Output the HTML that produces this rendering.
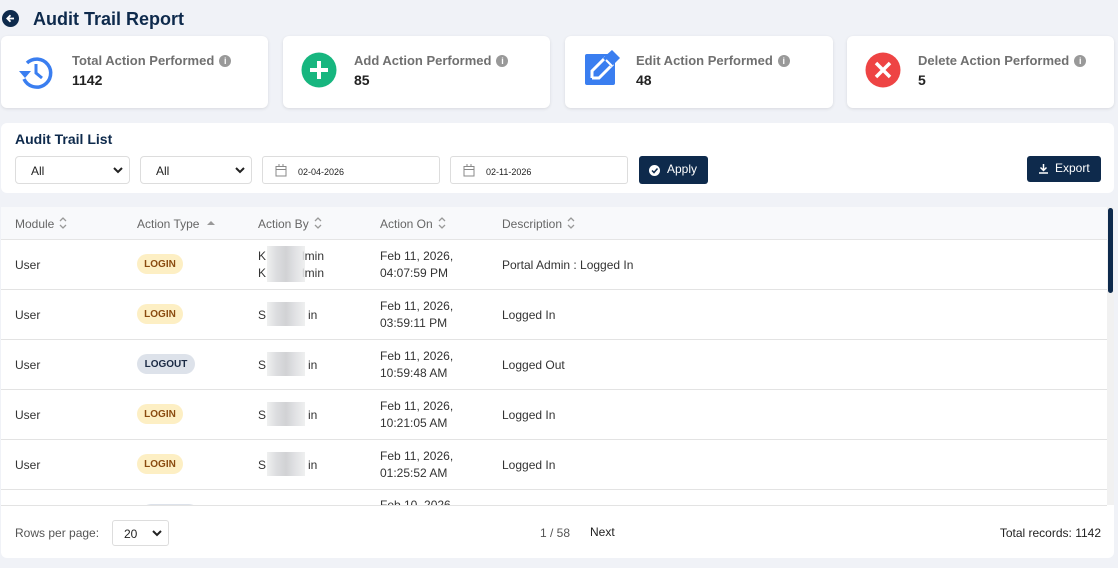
<!DOCTYPE html>
<html><head><style>
*{box-sizing:border-box;margin:0;padding:0}
body{width:1118px;height:568px;background:#f0f2f7;font-family:"Liberation Sans",Arial,sans-serif;position:relative;overflow:hidden;color:#333}
.abs{position:absolute}
.card{position:absolute;top:36px;height:72px;background:#fff;border-radius:6px;box-shadow:0 1px 3px rgba(0,0,0,.1)}
.card .lbl{position:absolute;left:71px;top:17px;font-size:13px;color:#707070;font-weight:bold}
.card .val{position:absolute;left:71px;top:36px;font-size:14px;color:#222;font-weight:bold}
.info{display:inline-block;width:12px;height:12px;border-radius:50%;background:#999;color:#fff;font-size:9px;text-align:center;line-height:12px;margin-left:5px;vertical-align:1px}
.sel{position:absolute;top:156px;height:28px;border:1px solid #ddd;border-radius:4px;background:#fff;font-size:12px;color:#222;padding:7px 0 0 15px}
.ch{position:absolute;right:6px;top:10px}
.date{position:absolute;top:156px;height:28px;border:1px solid #ddd;border-radius:3px;background:#fff;font-size:9px;color:#222;padding:10px 0 0 35px}
.btn{position:absolute;background:#0e2a4c;color:#fff;border-radius:3px;font-size:12px}
.hdr{position:absolute;top:207px;left:1px;width:1106px;height:33px;background:#f8f9fb;border-bottom:1px solid #e5e5e5}
.th{position:absolute;top:216px;font-size:12px;color:#666}
.th svg{vertical-align:-2px;margin-left:4px}
.row{position:absolute;left:1px;width:1106px;height:50px;background:#fff;border-bottom:1px solid #e3e3e3;font-size:12px;color:#333}
.row div{position:absolute}
.b{height:20px;border-radius:10px;font-size:10px;font-weight:bold;padding:5px 0 0;text-align:center}
.li{background:#fdefc4;color:#8a4b10;width:46px}
.lo{background:#dde2ea;color:#1b2a44;width:58px}
.blur{background:linear-gradient(90deg,#eceded,#d6d7da,#c9cacd,#dcdde0,#eceded);width:38px;height:28px;opacity:.85}
</style></head><body>
<svg class="abs" style="left:2px;top:10px" width="17" height="17" viewBox="0 0 17 17"><circle cx="8.5" cy="8.5" r="8.5" fill="#0e2a4c"/><path d="M12 8.5H5.5M8.5 5.3L5.3 8.5L8.5 11.7" stroke="#fff" stroke-width="1.8" fill="none"/></svg>
<div class="abs" style="left:33px;top:9px;font-size:18px;font-weight:bold;color:#0e2a4c">Audit Trail Report</div>

<div class="card" style="left:1px;width:267px">
<svg class="abs" style="left:16px;top:17px" width="38" height="38" viewBox="0 0 38 38"><path d="M10 10A14 14 0 1 1 7 26" stroke="#3a7ef0" stroke-width="3.5" fill="none"/><path d="M2 18l6 7 6-7z" fill="#3a7ef0"/><path d="M19 11v9l6 5" stroke="#3a7ef0" stroke-width="3" fill="none"/></svg>
<div class="lbl">Total Action Performed<span class="info">i</span></div><div class="val">1142</div></div>
<div class="card" style="left:283px;width:267px">
<svg class="abs" style="left:18px;top:16px" width="36" height="36"><circle cx="18" cy="18" r="17.5" fill="#17b67f"/><path d="M18 9v18M9 18h18" stroke="#fff" stroke-width="4"/></svg>
<div class="lbl">Add Action Performed<span class="info">i</span></div><div class="val">85</div></div>
<div class="card" style="left:565px;width:268px">
<svg class="abs" style="left:19px;top:14px" width="38" height="38" viewBox="0 0 38 38"><rect x="1" y="4" width="30" height="31" rx="2" fill="#3a7ef0"/><path d="M8 28V21L22 7" stroke="#fff" stroke-width="3" fill="none"/><path d="M8 28h7L29 14" stroke="#fff" stroke-width="3" fill="none"/><path d="M19 8l9-8 8 8-9 9z" fill="#3a7ef0"/><path d="M22 10l6 6" stroke="#fff" stroke-width="2"/></svg>
<div class="lbl">Edit Action Performed<span class="info">i</span></div><div class="val">48</div></div>
<div class="card" style="left:847px;width:267px">
<svg class="abs" style="left:18px;top:16px" width="36" height="36"><circle cx="18" cy="18" r="17.5" fill="#ee4444"/><path d="M11 11l14 14M25 11L11 25" stroke="#fff" stroke-width="3.5"/></svg>
<div class="lbl">Delete Action Performed<span class="info">i</span></div><div class="val">5</div></div>

<div class="abs" style="left:1px;top:123px;width:1113px;height:70px;background:#fff;border-radius:6px"></div>
<div class="abs" style="left:15px;top:131px;font-size:14px;font-weight:bold;color:#0e2a4c">Audit Trail List</div>
<div class="sel" style="left:15px;width:115px">All<svg class="ch" width="10" height="7"><path d="M1 1l4 4 4-4" stroke="#222" stroke-width="2" fill="none"/></svg></div>
<div class="sel" style="left:140px;width:112px">All<svg class="ch" width="10" height="7"><path d="M1 1l4 4 4-4" stroke="#222" stroke-width="2" fill="none"/></svg></div>
<div class="date" style="left:262px;width:178px"><svg class="abs" style="left:12px;top:7px" width="12" height="13"><rect x="1" y="2.5" width="10" height="9.5" fill="none" stroke="#888"/><path d="M1 5.5h10M4 0v3M8 0v3" stroke="#888"/></svg>02-04-2026</div>
<div class="date" style="left:450px;width:178px"><svg class="abs" style="left:12px;top:7px" width="12" height="13"><rect x="1" y="2.5" width="10" height="9.5" fill="none" stroke="#888"/><path d="M1 5.5h10M4 0v3M8 0v3" stroke="#888"/></svg>02-11-2026</div>
<div class="btn" style="left:639px;top:156px;width:69px;height:28px;padding:6px 0 0 28px"><svg class="abs" style="left:10px;top:9px" width="11" height="11"><circle cx="5.5" cy="5.5" r="5.5" fill="#fff"/><path d="M3 5.5l2 2 3.5-4" stroke="#0e2a4c" stroke-width="1.5" fill="none"/></svg>Apply</div>
<div class="btn" style="left:1027px;top:156px;width:74px;height:26px;padding:5px 0 0 28px"><svg class="abs" style="left:12px;top:8px" width="9" height="10"><path d="M4.5 0v6M1.5 3.5l3 3 3-3M0 9h9" stroke="#fff" stroke-width="1.5" fill="none"/></svg>Export</div>

<div class="abs" style="left:1px;top:207px;width:1113px;height:351px;background:#fff;border-radius:6px"></div>
<div class="hdr"></div>
<div class="th" style="left:15px">Module<svg width="10" height="14"><path d="M2 5l3-3 3 3M2 9l3 3 3-3" stroke="#999" stroke-width="1.3" fill="none"/></svg></div>
<div class="th" style="left:137px">Action Type<svg width="14" height="14"><path d="M4 9l4-4 4 4z" fill="#999"/></svg></div>
<div class="th" style="left:258px">Action By<svg width="10" height="14"><path d="M2 5l3-3 3 3M2 9l3 3 3-3" stroke="#999" stroke-width="1.3" fill="none"/></svg></div>
<div class="th" style="left:380px">Action On<svg width="10" height="14"><path d="M2 5l3-3 3 3M2 9l3 3 3-3" stroke="#999" stroke-width="1.3" fill="none"/></svg></div>
<div class="th" style="left:502px">Description<svg width="10" height="14"><path d="M2 5l3-3 3 3M2 9l3 3 3-3" stroke="#999" stroke-width="1.3" fill="none"/></svg></div>

<div class="row" style="top:240px"><div style="left:14px;top:18px">User</div><div class="b li" style="left:136px;top:14px">LOGIN</div><div style="left:257px;top:8px;line-height:17px">K<span style="color:#fff0">xxxxxx</span>lmin<br>K<span style="color:#fff0">xxxxxx</span>lmin</div><div class="blur" style="left:266px;top:6px;height:36px"></div><div style="left:379px;top:8px;line-height:17px">Feb 11, 2026,<br>04:07:59 PM</div><div style="left:501px;top:18px">Portal Admin : Logged In</div></div>
<div class="row" style="top:290px"><div style="left:14px;top:18px">User</div><div class="b li" style="left:136px;top:14px">LOGIN</div><div style="left:257px;top:18px">S<span style="color:#fff0">xxxxxxx</span>in</div><div class="blur" style="left:266px;top:12px;height:24px"></div><div style="left:379px;top:8px;line-height:17px">Feb 11, 2026,<br>03:59:11 PM</div><div style="left:501px;top:18px">Logged In</div></div>
<div class="row" style="top:340px"><div style="left:14px;top:18px">User</div><div class="b lo" style="left:136px;top:14px">LOGOUT</div><div style="left:257px;top:18px">S<span style="color:#fff0">xxxxxxx</span>in</div><div class="blur" style="left:266px;top:12px;height:24px"></div><div style="left:379px;top:8px;line-height:17px">Feb 11, 2026,<br>10:59:48 AM</div><div style="left:501px;top:18px">Logged Out</div></div>
<div class="row" style="top:390px"><div style="left:14px;top:18px">User</div><div class="b li" style="left:136px;top:14px">LOGIN</div><div style="left:257px;top:18px">S<span style="color:#fff0">xxxxxxx</span>in</div><div class="blur" style="left:266px;top:12px;height:24px"></div><div style="left:379px;top:8px;line-height:17px">Feb 11, 2026,<br>10:21:05 AM</div><div style="left:501px;top:18px">Logged In</div></div>
<div class="row" style="top:440px"><div style="left:14px;top:18px">User</div><div class="b li" style="left:136px;top:14px">LOGIN</div><div style="left:257px;top:18px">S<span style="color:#fff0">xxxxxxx</span>in</div><div class="blur" style="left:266px;top:12px;height:24px"></div><div style="left:379px;top:8px;line-height:17px">Feb 11, 2026,<br>01:25:52 AM</div><div style="left:501px;top:18px">Logged In</div></div>
<div class="row" style="top:490px;height:15px;overflow:hidden;border:0"><div class="b lo" style="left:140px;top:14px"></div><div style="left:379px;top:8px">Feb 10, 2026,</div></div>
<div class="abs" style="left:1px;top:505px;width:1106px;height:1px;background:#e3e3e3"></div>
<div class="abs" style="left:1107px;top:207px;width:7px;height:298px;background:#f1f1f1"></div>
<div class="abs" style="left:1108px;top:208px;width:5px;height:85px;background:#0e2a4c;border-radius:3px"></div>

<div class="abs" style="left:15px;top:526px;font-size:12px;color:#555">Rows per page:</div>
<div class="abs" style="left:112px;top:520px;width:57px;height:26px;border:1px solid #ddd;border-radius:3px;font-size:12px;padding:6px 0 0 11px;color:#222">20<svg style="position:absolute;right:6px;top:9px" width="10" height="7"><path d="M1 1l4 4 4-4" stroke="#222" stroke-width="2" fill="none"/></svg></div>
<div class="abs" style="left:540px;top:526px;font-size:12px;color:#555">1 / 58</div>
<div class="abs" style="left:590px;top:525px;font-size:12px;color:#222">Next</div>
<div class="abs" style="right:17px;top:526px;font-size:12px;color:#222">Total records: 1142</div>
</body></html>
